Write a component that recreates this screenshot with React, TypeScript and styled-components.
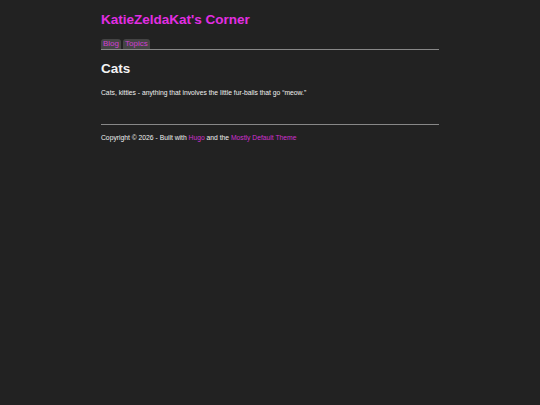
import React from 'react';
import styled, { createGlobalStyle } from 'styled-components';

const GlobalStyle = createGlobalStyle`
  html, body {
    margin: 0;
    padding: 0;
    background: #222222;
    min-height: 100%;
  }
  body {
    font-family: "Liberation Sans", Arial, sans-serif;
    color: #f0f0f0;
  }
`;

const Page = styled.div`
  width: 338px;
  margin: 0 auto;
  padding-top: 12px;
  min-height: 393px;
`;

const SiteTitle = styled.a`
  display: block;
  font-size: 13.5px;
  font-weight: bold;
  color: #e22ee2;
  text-decoration: none;
  line-height: 16px;
`;

const Nav = styled.nav`
  display: flex;
  gap: 2px;
  margin-top: 11px;
  border-bottom: 1px solid #888;
`;

const Tab = styled.a`
  background: #444444;
  color: #d040d0;
  font-size: 8px;
  line-height: 10px;
  padding: 0 2px;
  border-radius: 3px 3px 0 0;
  text-decoration: none;
`;

const Heading = styled.h1`
  margin: 11px 0 0;
  font-size: 13.5px;
  line-height: 16px;
  color: #f4f4f4;
`;

const Text = styled.p`
  margin: 12px 0 0;
  font-size: 6.75px;
  line-height: 8px;
`;

const Footer = styled.footer`
  margin-top: 27px;
  border-top: 1px solid #888;
  padding-top: 9px;
  font-size: 6.75px;
  line-height: 8px;
`;

const Link = styled.a`
  color: #d030d0;
  text-decoration: none;
`;

const App: React.FC = () => {
  return (
    <>
      <GlobalStyle />
      <Page>
        <SiteTitle href="#">KatieZeldaKat's Corner</SiteTitle>
        <Nav>
          <Tab href="#">Blog</Tab>
          <Tab href="#">Topics</Tab>
        </Nav>
        <Heading>Cats</Heading>
        <Text>Cats, kitties - anything that involves the little fur-balls that go “meow.”</Text>
        <Footer>
          Copyright © 2026 - Built with <Link href="#">Hugo</Link> and the{' '}
          <Link href="#">Mostly Default Theme</Link>
        </Footer>
      </Page>
    </>
  );
};

export default App;
